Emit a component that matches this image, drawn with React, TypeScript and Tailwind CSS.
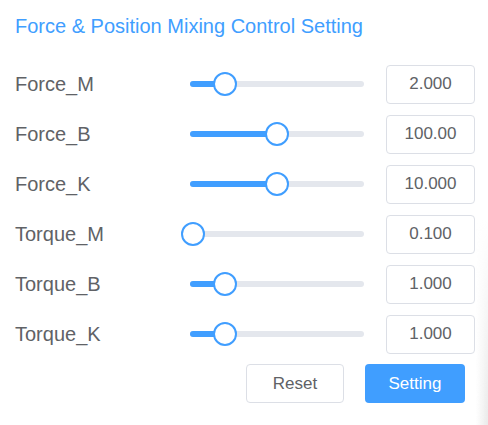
import React from "react";

type Row = { label: string; value: string; ratio: number };

const rows: Row[] = [
  { label: "Force_M", value: "2.000", ratio: 0.2 },
  { label: "Force_B", value: "100.00", ratio: 0.5 },
  { label: "Force_K", value: "10.000", ratio: 0.5 },
  { label: "Torque_M", value: "0.100", ratio: 0.02 },
  { label: "Torque_B", value: "1.000", ratio: 0.2 },
  { label: "Torque_K", value: "1.000", ratio: 0.2 },
];

function Slider({ ratio }: { ratio: number }) {
  const width = 174;
  const pos = ratio * width;
  return (
    <div className="relative w-[174px] h-[6px] rounded-full bg-[#e4e7ed]">
      <div
        className="absolute left-0 top-0 h-[6px] rounded-full bg-[#409eff]"
        style={{ width: pos }}
      />
      <div
        className="absolute top-1/2 w-[24px] h-[24px] -translate-x-1/2 -translate-y-1/2 rounded-full border-2 border-[#409eff] bg-white"
        style={{ left: pos }}
      />
    </div>
  );
}

export default function App() {
  return (
    <div
      className="relative w-[488px] h-[425px] overflow-hidden bg-white text-[#606266]"
      style={{ fontFamily: '"Liberation Sans", Arial, sans-serif' }}
    >
      <div className="pl-[15px] pt-3 text-[20px] leading-[28px] text-[#409eff]">
        Force &amp; Position Mixing Control Setting
      </div>
      <div className="mt-[19px] flex flex-col">
        {rows.map((r) => (
          <div key={r.label} className="flex h-[50px] items-center pl-[15px]">
            <div className="w-[175px] text-[20px] leading-[28px]">{r.label}</div>
            <Slider ratio={r.ratio} />
            <div className="ml-[22px] flex h-[39px] w-[89px] items-center justify-center rounded-[4px] border border-[#dcdfe6] bg-white text-[17px] text-[#606266]">
              {r.value}
            </div>
          </div>
        ))}
      </div>
      <div className="mt-[5px] flex justify-end gap-[21px] pr-[23px]">
        <button className="flex h-[39px] w-[98px] items-center justify-center rounded-[4px] border border-[#dcdfe6] bg-white text-[17px] text-[#606266]">
          Reset
        </button>
        <button className="flex h-[39px] w-[100px] items-center justify-center rounded-[4px] bg-[#409eff] text-[17px] text-white">
          Setting
        </button>
      </div>
      <div className="pointer-events-none absolute right-0 top-[220px] bottom-0 w-[12px] bg-linear-to-r from-transparent to-[#e9e9e9] [mask-image:linear-gradient(to_bottom,transparent,black)]" />
    </div>
  );
}
